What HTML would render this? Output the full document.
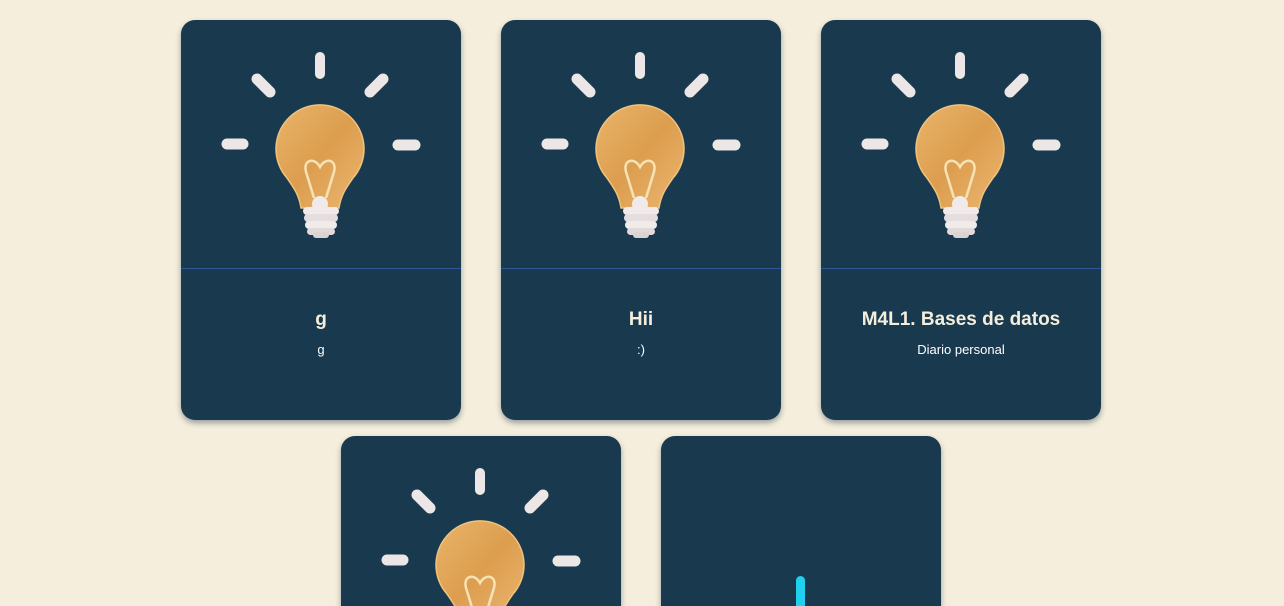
<!DOCTYPE html>
<html style="height:606px;overflow:hidden"><head><style>
body{margin:0;background:#f5eedc;width:1284px;height:606px;overflow:hidden;position:relative;font-family:"Liberation Sans",sans-serif}
.card{position:absolute;width:280px;height:400px;background:#193a4e;border-radius:14px;box-shadow:0 3px 6px rgba(40,60,80,.45)}
.card svg{position:absolute;left:0;top:0}
.div{position:absolute;left:0;right:0;top:248px;height:1px;background:#2f5a9a}
.t{position:absolute;left:0;right:0;top:289px;text-align:center;color:#f5eedc;font-weight:bold;font-size:19px}
.s{position:absolute;left:0;right:0;top:322px;text-align:center;color:#fff;font-size:13px}
</style></head><body>
<svg width="0" height="0" style="position:absolute"><defs>
<linearGradient id="g" x1="0" y1="0" x2="1" y2="1"><stop offset="0" stop-color="#e8b56a"/><stop offset=".5" stop-color="#dd9d4e"/><stop offset="1" stop-color="#eab872"/></linearGradient>
<g id="bulb">
<g stroke="#ece6e6" stroke-linecap="round" fill="none">
<line x1="139" y1="37" x2="139" y2="54" stroke-width="10"/>
<line x1="76" y1="59" x2="89" y2="72" stroke-width="11"/>
<line x1="202" y1="59" x2="189" y2="72" stroke-width="11"/>
<line x1="46" y1="124" x2="62" y2="124" stroke-width="11"/>
<line x1="217" y1="125" x2="234" y2="125" stroke-width="11"/>
</g>
<path d="M106,158 A44,44 0 1 1 172,158 C165,168 160,175 158,188 L120,188 C118,175 113,168 106,158 Z" fill="url(#g)" stroke="#efc27c" stroke-width="1.5"/>
<path d="M133,178 L126,155 C120,140 133,136 139,147 C145,136 158,140 152,155 L145,178" fill="none" stroke="#f5e3b8" stroke-width="2.5"/>
<circle cx="139" cy="184" r="8" fill="#f0eaea"/>
<rect x="122" y="187" width="36" height="8" rx="4" fill="#f0eaea"/>
<rect x="123" y="194" width="34" height="8" rx="4" fill="#e6dede"/>
<rect x="124" y="201" width="32" height="8" rx="4" fill="#f0eaea"/>
<rect x="126" y="208" width="28" height="7" rx="3.5" fill="#e2d9d9"/>
<rect x="132" y="212" width="16" height="6" rx="3" fill="#ddd3d3"/>
</g></defs></svg>

<div class="card" style="left:181px;top:20px"><svg width="280" height="248"><use href="#bulb"/></svg><div class="div"></div><div class="t">g</div><div class="s">g</div></div>
<div class="card" style="left:501px;top:20px"><svg width="280" height="248"><use href="#bulb"/></svg><div class="div"></div><div class="t">Hii</div><div class="s">:)</div></div>
<div class="card" style="left:821px;top:20px"><svg width="280" height="248"><use href="#bulb"/></svg><div class="div"></div><div class="t">M4L1. Bases de datos</div><div class="s">Diario personal</div></div>
<div class="card" style="left:341px;top:436px;height:170px;border-radius:14px 14px 0 0"><svg width="280" height="170"><use href="#bulb"/></svg></div>
<div class="card" style="left:661px;top:436px;height:170px;border-radius:14px 14px 0 0"><div style="position:absolute;left:135px;top:140px;width:9px;height:60px;border-radius:5px;background:#1fd0f0"></div></div>
</body></html>
